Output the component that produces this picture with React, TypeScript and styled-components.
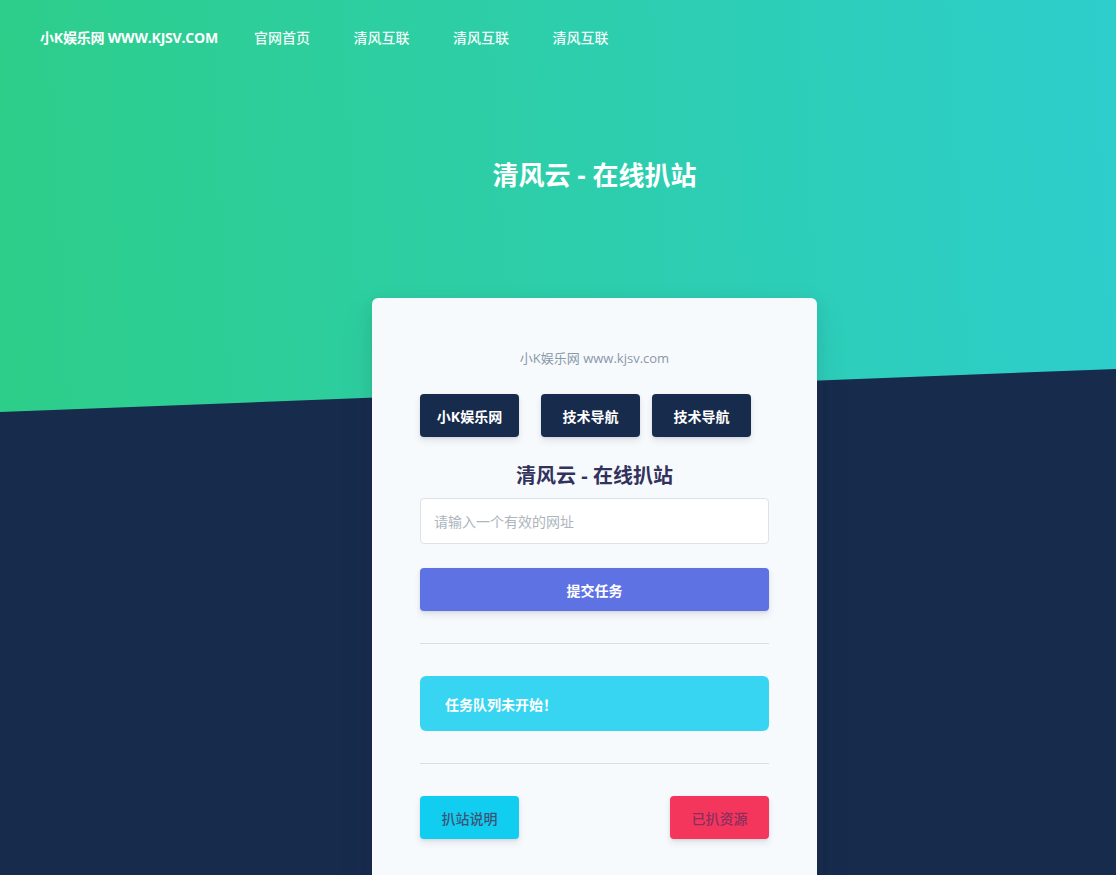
import styled, { createGlobalStyle } from "styled-components";

const GlobalStyle = createGlobalStyle`
  html, body {
    margin: 0;
    padding: 0;
  }
  body {
    background: #172b4d;
    font-family: "Open Sans", "Noto Sans CJK SC", sans-serif;
    color: #525f7f;
    overflow: hidden;
  }
  * {
    box-sizing: border-box;
  }
`;

const Page = styled.div`
  min-height: 875px;
  background: #172b4d;
`;

const Hero = styled.header`
  height: 412px;
  background: linear-gradient(87deg, #2dce89 0, #2dcecc 100%);
  clip-path: polygon(0 0, 100% 0, 100% 369px, 0 412px);
  display: flex;
  flex-direction: column;
`;

const Nav = styled.nav`
  display: flex;
  align-items: center;
  height: 74px;
  padding: 0 40px;
`;

const Brand = styled.a`
  color: #fff;
  font-size: 14px;
  font-weight: 700;
  letter-spacing: -0.2px;
  text-decoration: none;
  margin-right: 36px;
`;

const NavLinks = styled.div`
  display: flex;
  gap: 43.5px;
`;

const NavLink = styled.a`
  color: rgba(255, 255, 255, 0.95);
  font-size: 14px;
  font-weight: 500;
  text-decoration: none;
`;

const HeroTitle = styled.h1`
  margin: 81px 0 0 73px;
  text-align: center;
  color: #fff;
  font-size: 26px;
  font-weight: 700;
`;

const Main = styled.main`
  position: relative;
  z-index: 1;
  display: flex;
  justify-content: center;
  padding-left: 73px;
  margin-top: -114px;
`;

const Card = styled.section`
  width: 445px;
  min-height: 600px;
  background: #f7fafc;
  border-radius: 6px;
  padding: 50px 48px 40px;
  box-shadow: 0 15px 35px rgba(50, 50, 93, 0.1), 0 5px 15px rgba(0, 0, 0, 0.07);
`;

const SiteText = styled.p`
  margin: 0;
  text-align: center;
  color: #8898aa;
  font-size: 13px;
  line-height: 20px;
`;

const ButtonRow = styled.div`
  display: flex;
  margin-top: 26px;
`;

const Button = styled.a<{ $bg: string; $color?: string; $weight?: number; $full?: boolean }>`
  display: flex;
  align-items: center;
  justify-content: center;
  height: 43px;
  width: ${({ $full }) => ($full ? "100%" : "99px")};
  background: ${({ $bg }) => $bg};
  color: ${({ $color }) => $color || "#fff"};
  font-size: 14px;
  font-weight: ${({ $weight }) => $weight || 700};
  border-radius: 4px;
  text-decoration: none;
  box-shadow: 0 4px 6px rgba(50, 50, 93, 0.11), 0 1px 3px rgba(0, 0, 0, 0.08);
  cursor: pointer;
`;

const NavButton = styled(Button)<{ $gap: number }>`
  margin-right: ${({ $gap }) => $gap}px;
`;

const CardTitle = styled.h2`
  margin: 27px 0 10px;
  text-align: center;
  color: #32325d;
  font-size: 20px;
  font-weight: 700;
  line-height: 24px;
`;

const UrlInput = styled.input`
  display: block;
  width: 100%;
  height: 46px;
  border: 1px solid #dee2e6;
  border-radius: 4px;
  background: #fff;
  padding: 0 13px;
  font-size: 14px;
  font-family: inherit;
  color: #525f7f;
  outline: none;

  &::placeholder {
    color: #adb5bd;
  }
`;

const SubmitWrap = styled.div`
  margin-top: 24px;
`;

const Divider = styled.hr`
  border: 0;
  border-top: 1px solid #dadde2;
  margin: 32px 0;
`;

const Alert = styled.div`
  height: 55px;
  display: flex;
  align-items: center;
  padding: 0 25px;
  background: #37d5f2;
  border-radius: 6px;
  color: #fff;
  font-size: 14px;
  font-weight: 600;
`;

const FooterRow = styled.div`
  display: flex;
  justify-content: space-between;
`;

export default function App() {
  return (
    <Page>
      <GlobalStyle />
      <Hero>
        <Nav>
          <Brand href="#">小K娱乐网 WWW.KJSV.COM</Brand>
          <NavLinks>
            <NavLink href="#">官网首页</NavLink>
            <NavLink href="#">清风互联</NavLink>
            <NavLink href="#">清风互联</NavLink>
            <NavLink href="#">清风互联</NavLink>
          </NavLinks>
        </Nav>
        <HeroTitle>清风云 - 在线扒站</HeroTitle>
      </Hero>
      <Main>
        <Card>
          <SiteText>小K娱乐网 www.kjsv.com</SiteText>
          <ButtonRow>
            <NavButton $bg="#172b4d" $gap={22}>小K娱乐网</NavButton>
            <NavButton $bg="#172b4d" $gap={12}>技术导航</NavButton>
            <NavButton $bg="#172b4d" $gap={0}>技术导航</NavButton>
          </ButtonRow>
          <CardTitle>清风云 - 在线扒站</CardTitle>
          <UrlInput placeholder="请输入一个有效的网址" />
          <SubmitWrap>
            <Button $bg="#5e72e4" $full>提交任务</Button>
          </SubmitWrap>
          <Divider />
          <Alert>任务队列未开始！</Alert>
          <Divider />
          <FooterRow>
            <Button $bg="#11cdef" $color="#3b5578" $weight={500}>扒站说明</Button>
            <Button $bg="#f5365c" $color="#8a2e5e" $weight={500}>已扒资源</Button>
          </FooterRow>
        </Card>
      </Main>
    </Page>
  );
}
